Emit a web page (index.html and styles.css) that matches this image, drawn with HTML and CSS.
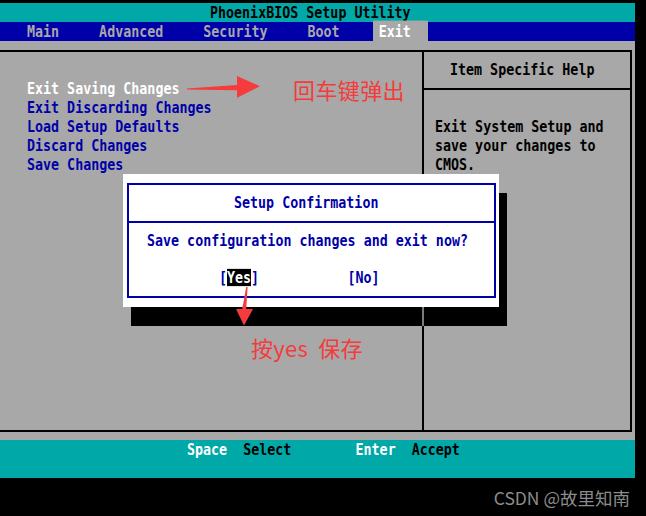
FILE: index.html
```html
<!DOCTYPE html>
<html lang="zh-CN">
<head>
<meta charset="utf-8">
<title>PhoenixBIOS Setup Utility</title>
<link rel="stylesheet" href="styles.css">
</head>
<body>
<div class="screen">
  <header class="titlebar"><span class="vga">PhoenixBIOS Setup Utility</span></header>
  <nav class="menubar">
    <span class="vga">Main</span>
    <span class="vga">Advanced</span>
    <span class="vga">Security</span>
    <span class="vga">Boot</span>
    <span class="vga active">Exit</span>
  </nav>
  <main class="body">
    <div class="frame">
      <ul class="options">
        <li class="vga sel">Exit Saving Changes</li>
        <li class="vga">Exit Discarding Changes</li>
        <li class="vga">Load Setup Defaults</li>
        <li class="vga">Discard Changes</li>
        <li class="vga">Save Changes</li>
      </ul>
      <aside class="help">
        <div class="help-head"><span class="vga">Item Specific Help</span></div>
        <div class="help-text">
          <p class="vga">Exit System Setup and</p>
          <p class="vga">save your changes to</p>
          <p class="vga">CMOS.</p>
        </div>
      </aside>
    </div>
  </main>
  <footer class="keybar"><p class="vga"><span class="k">Space</span>  <span class="d">Select</span>        <span class="k">Enter</span>  <span class="d">Accept</span></p></footer>
</div>
<div class="strip"><span class="watermark">CSDN @故里知南</span></div>

<div class="dialog">
  <div class="dlg-frame">
    <div class="dlg-title"><span class="vga">Setup Confirmation</span></div>
    <p class="dlg-msg vga">Save configuration changes and exit now?</p>
    <p class="dlg-btns vga">[<span class="yes">Yes</span>]           [No]</p>
  </div>
</div>

<svg class="marks" width="646" height="516" viewBox="0 0 646 516">
  <polygon points="187,88.6 237,85 237,76 260,86.2 237,97.8 237,90.2 187,89.6" fill="#f53b3b"/>
  <polygon points="246.2,287 247.6,287 246.2,309 253,309 244,325.5 236,309 242.2,309" fill="#f53b3b"/>
</svg>
<div class="note note-enter">回车键弹出</div>
<div class="note note-yes">按yes 保存</div>
</body>
</html>
```
FILE: styles.css
```css
* {
  box-sizing: border-box;
  margin: 0;
  padding: 0;
}

body {
  margin: 0;
  width: 646px;
  height: 516px;
  overflow: hidden;
  position: relative;
  background: #000;
  font-family: "DejaVu Sans Mono", "Liberation Mono", monospace;
  font-size: 13.33px;
  font-weight: bold;
}

.vga {
  display: block;
  transform: scaleY(1.15);
}

.screen {
  width: 635px;
  padding-top: 3px;
  background: #000;
}

.titlebar {
  height: 19px;
  line-height: 19px;
  background: #00a8a8;
  color: #000;
  padding-left: 210px;
}

.menubar {
  height: 19px;
  display: flex;
  gap: 28px;
  padding-left: 21px;
  background: #0000a8;
}

.menubar span {
  line-height: 19px;
  padding: 0 6px;
  color: #a8a8a8;
}

.menubar .active {
  margin-left: -1px;
  padding: 0 17px 0 6px;
  background: #a8a8a8;
  color: #fff;
}

.body {
  height: 399px;
  padding: 9px 0 8px;
  background: #a8a8a8;
}

.frame {
  display: flex;
  width: 632px;
  height: 382px;
  border: 2px solid #000;
  border-left: none;
}

.options {
  width: 422px;
  list-style: none;
  padding: 27px 0 0 27px;
}

.options li {
  line-height: 19px;
  color: #0000a8;
}

.options li.sel {
  color: #fff;
}

.help {
  flex: 1;
  border-left: 2px solid #000;
  color: #000;
}

.help-head {
  height: 38px;
  line-height: 35px;
  padding-left: 26px;
  border-bottom: 2px solid #000;
}

.help-text {
  padding: 27px 0 0 11px;
  line-height: 19px;
}

.keybar {
  height: 38px;
  padding-left: 187px;
  background: #00a8a8;
  line-height: 19px;
  white-space: pre;
}

.keybar .k {
  color: #fff;
}

.keybar .d {
  color: #000;
}

.strip {
  height: 38px;
  display: flex;
  justify-content: flex-end;
  align-items: center;
  padding-right: 16px;
}

.watermark {
  font-family: "Noto Sans CJK SC", "Noto Sans", sans-serif;
  font-weight: normal;
  font-size: 17.5px;
  color: #8c8c8c;
}

/* confirmation dialog overlay */
.dialog {
  position: absolute;
  left: 123px;
  top: 174px;
  width: 376px;
  height: 133px;
  padding: 9px 3px 9px 4px;
  background: #fff;
  box-shadow: 8px 19px 0 #000;
  color: #0000a8;
}

.dialog::after {
  content: "";
  position: absolute;
  left: 299px;
  top: 133px;
  width: 2px;
  height: 19px;
  background: #7a7a7a;
}

.dlg-frame {
  height: 115px;
  border: 2px solid #0000a8;
}

.dlg-title {
  height: 38px;
  line-height: 36px;
  padding-left: 105px;
  border-bottom: 2px solid #0000a8;
}

.dlg-msg {
  padding: 8px 0 0 18px;
  line-height: 19px;
}

.dlg-btns {
  margin-top: 18px;
  padding-left: 90px;
  line-height: 19px;
  white-space: pre;
}

.yes {
  background: #000;
  color: #fff;
}

/* red annotations */
.marks {
  position: absolute;
  left: 0;
  top: 0;
  pointer-events: none;
}

.note {
  position: absolute;
  font-family: "Noto Sans CJK SC", "Noto Sans", sans-serif;
  font-weight: normal;
  font-size: 22px;
  line-height: 22px;
  color: #f53b3b;
  white-space: nowrap;
}

.note-enter {
  left: 293px;
  top: 78px;
  letter-spacing: 0.4px;
}

.note-yes {
  left: 251px;
  top: 336px;
  word-spacing: 5px;
  letter-spacing: 0.3px;
}
```
